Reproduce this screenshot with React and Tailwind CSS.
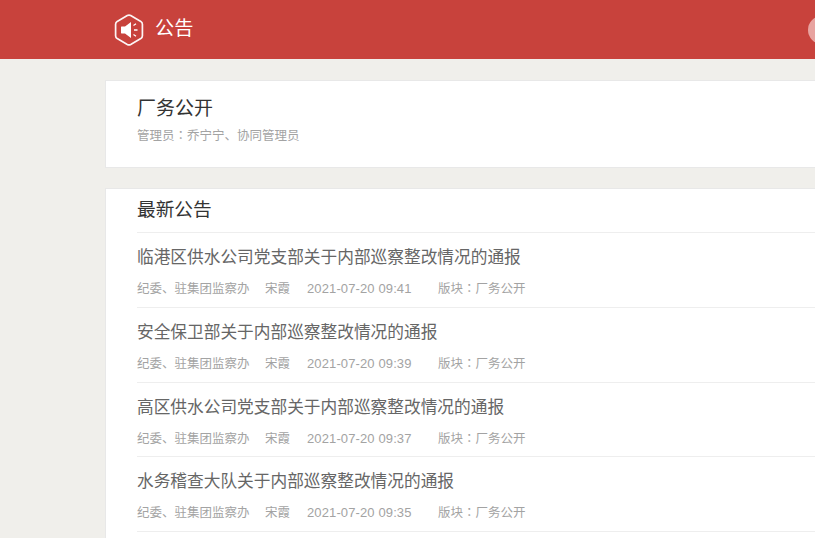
const font = { fontFamily: '"Liberation Sans", "Noto Sans CJK SC", sans-serif' };
const colon = { fontFamily: '"Noto Sans CJK TC", sans-serif' };

const items = [
  { title: "临港区供水公司党支部关于内部巡察整改情况的通报", time: "2021-07-20 09:41" },
  { title: "安全保卫部关于内部巡察整改情况的通报", time: "2021-07-20 09:39" },
  { title: "高区供水公司党支部关于内部巡察整改情况的通报", time: "2021-07-20 09:37" },
  { title: "水务稽查大队关于内部巡察整改情况的通报", time: "2021-07-20 09:35" },
];

function Logo() {
  return (
    <svg width="30" height="32" viewBox="0 0 30 32" fill="none">
      <path d="M13.3 1.6 Q15 0.7 16.7 1.6 L26.8 7.4 Q28.4 8.4 28.4 10.2 V21.8 Q28.4 23.6 26.8 24.6 L16.7 30.4 Q15 31.3 13.3 30.4 L3.2 24.6 Q1.6 23.6 1.6 21.8 V10.2 Q1.6 8.4 3.2 7.4 Z" stroke="#fff" strokeWidth="1.7" opacity="0.95" />
      <path d="M7.5 12.5 Q7 12.5 7 13.2 V18.8 Q7 19.5 7.5 19.5 H11 L17 24 V8 L11 12.5 Z" fill="#fff" />
      <path d="M19.5 11.5 L22 9.8 M20 16 H23.5 M19.5 20.5 L22 22.2" stroke="#fff" strokeWidth="1.3" />
    </svg>
  );
}

function Row({ title, time }) {
  return (
    <div className="h-[74.75px] border-b border-[#eeeeee] box-border">
      <div className="h-[48.2px] pt-[12px] text-[16.7px] leading-[25px] text-[#666666] whitespace-nowrap">{title}</div>
      <div className="flex items-baseline text-[12.5px] leading-[14px] text-[#a3a3a3] whitespace-nowrap">
        <span className="w-[128px]">纪委、驻集团监察办</span>
        <span className="w-[42px]">宋霞</span>
        <span className="w-[131px] text-[13px] tracking-[0.12px]">{time}</span>
        <span>版块<span style={colon}>：</span>厂务公开</span>
      </div>
    </div>
  );
}

export default function App() {
  return (
    <div className="w-[815px] h-[538px] overflow-hidden bg-[#f0efeb]" style={font}>
      <header className="h-[59px] bg-[#c8423c] flex items-center pl-[114px] overflow-hidden">
        <Logo />
        <span className="ml-[11px] text-[19.2px] text-white">公告</span>
        <div className="ml-auto mr-[-21px] w-[28px] h-[28px] shrink-0 rounded-full bg-[#e8a3a0]" />
      </header>
      <main className="pl-[105px] pt-[21px]">
        <section className="w-[900px] h-[88px] bg-white border border-[#e8e8e8] box-border pl-[31px] pt-[15px]">
          <h1 className="text-[19px] leading-[26px] text-[#333333]">厂务公开</h1>
          <p className="mt-[6px] text-[12.5px] leading-[14px] text-[#a3a3a3]">管理员<span style={colon}>：</span>乔宁宁、协同管理员</p>
        </section>
        <section className="mt-[20px] w-[900px] h-[400px] bg-white border border-[#e8e8e8] box-border pl-[31px]">
          <h2 className="h-[44px] border-b border-[#eeeeee] box-border pt-[8px] text-[18.7px] leading-[26px] text-[#333333]">最新公告</h2>
          {items.map((it) => (
            <Row key={it.title} {...it} />
          ))}
        </section>
      </main>
    </div>
  );
}
